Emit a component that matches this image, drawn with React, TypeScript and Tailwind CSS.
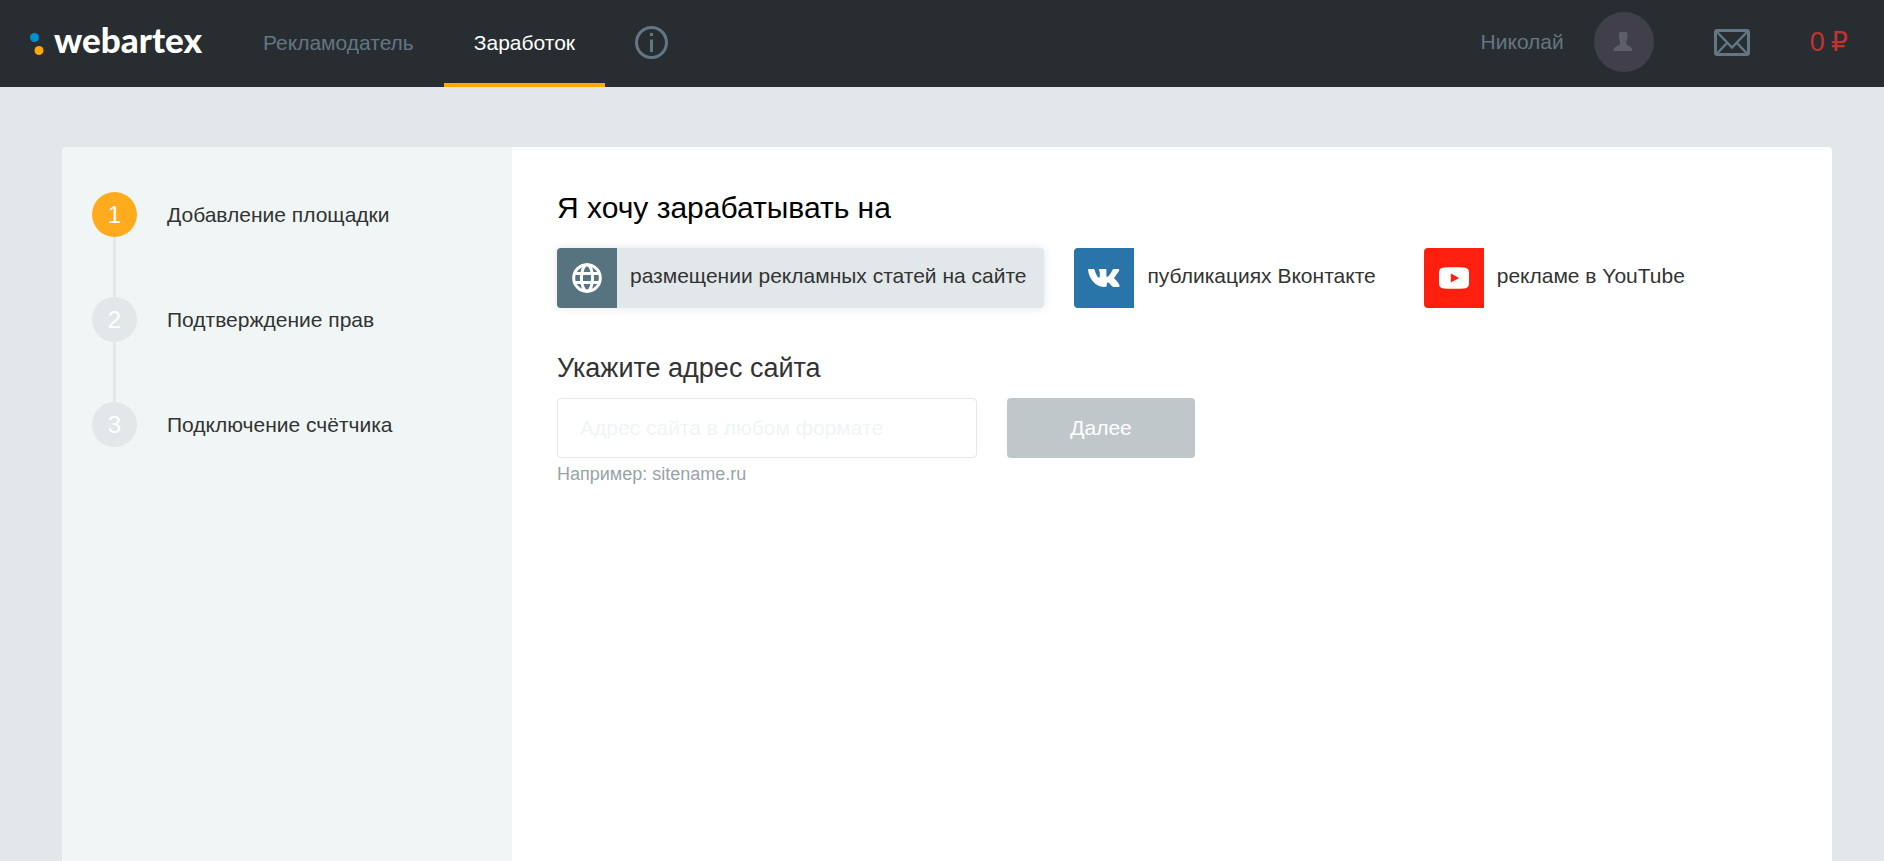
import { useState } from "react";

type Source = "site" | "vk" | "youtube";

const steps = ["Добавление площадки", "Подтверждение прав", "Подключение счётчика"];

function GlobeIcon() {
  return (
    <svg viewBox="0 0 30 30" className="w-[30px] h-[30px]" fill="none" stroke="white" strokeWidth="3">
      <circle cx="15" cy="15" r="13.3" />
      <ellipse cx="15" cy="15" rx="5.600" ry="13.3" />
      <path d="M3 10.500h24M3 19.500h24" />
    </svg>
  );
}

function VkIcon() {
  return (
    <svg viewBox="0 0 32 18" className="w-8 h-[18px]" fill="white">
      <path d="M0 .8C0 .2.4 0 1 0h4.200c.8 0 1.200.3 1.500 1.200C7.700 4.600 9.700 8.600 11 8.600c.6 0 .8-.4.8-1.800V3.500c-.1-1.700-1.100-2-1.100-2.700 0-.5.400-.8.900-.8h5.800c.8 0 1 .4 1 1.200v5.600c0 .8.4 1.100.7 1.100.5 0 1-.3 1.900-1.300 1.700-1.900 3.100-4.900 3.400-5.600.3-.7.800-1 1.500-1h4.200c1.100 0 1.400.6 1.100 1.300-.8 2-3.300 5.200-4.400 6.600-.6.900-.8 1.200 0 2.100 1 1.100 3.700 3.700 4.700 6.200.4 1.100-.1 1.800-1.200 1.800h-4.600c-1.100 0-1.500-.7-3.200-2.500-1.500-1.600-2.200-1.900-2.600-1.900-.7 0-1.100.3-1.100 1.300v1.700c0 .9-.3 1.400-2.700 1.400C7.200 18 .9 9.500 0 .8z" />
    </svg>
  );
}

function YoutubeIcon() {
  return (
    <svg viewBox="0 0 30 22" className="w-[30px] h-[22px]">
      <path
        fill="white"
        d="M5 .6C11 0 19 0 25 .6c3.500.3 5 1.900 5 5.400v10c0 3.500-1.500 5.100-5 5.400-6 .6-14 .6-20 0C1.500 21.100 0 19.500 0 16V6C0 2.500 1.500.9 5 .6z"
      />
      <path fill="#ff1f0f" d="M11.800 6.500v9l8.400-4.500z" />
    </svg>
  );
}

const sources: { id: Source; label: string; color: string; icon: React.ReactNode }[] = [
  { id: "site", label: "размещении рекламных статей на сайте", color: "bg-[#56737f]", icon: <GlobeIcon /> },
  { id: "vk", label: "публикациях Вконтакте", color: "bg-[#2975a9]", icon: <VkIcon /> },
  { id: "youtube", label: "рекламе в YouTube", color: "bg-[#ff1f0f]", icon: <YoutubeIcon /> },
];

function Header() {
  return (
    <header className="flex items-center justify-between h-[87px] pl-[30px] pr-9 bg-[#282d31] text-[#637683] text-[21px]">
      <div className="flex items-center h-full">
        <a href="#" className="flex items-center gap-2.5 w-[203px]">
          <svg viewBox="0 0 14 22" className="w-3.5 h-[22px]">
            <circle cx="4.500" cy="4.500" r="4.500" fill="#0090cf" />
            <circle cx="9" cy="17.500" r="4.500" fill="#ffa800" />
          </svg>
          <span className="pb-2.5 text-white text-[35px] leading-9 font-black font-['Lato',sans-serif]">webartex</span>
        </a>
        <nav className="flex h-full">
          <a href="#" className="flex items-center h-full pt-0.5 px-[30px] border-b-4 border-transparent">
            Рекламодатель
          </a>
          <a href="#" className="flex items-center h-full pt-0.5 px-[30px] border-b-4 border-[#ffa800] text-white">
            Заработок
          </a>
          <a href="#" aria-label="Информация" className="flex items-center h-full pb-0.5 px-[30px]">
            <svg viewBox="0 0 33 33" className="w-[33px] h-[33px]" fill="none" stroke="currentColor" strokeWidth="3">
              <circle cx="16.500" cy="16.500" r="15" />
              <path d="M16.500 7v3M16.500 13.500v12.500" />
            </svg>
          </a>
        </nav>
      </div>
      <div className="flex items-center h-full pb-[3px]">
        <a href="#" className="flex items-center gap-[30px]">
          Николай
          <svg viewBox="0 0 60 60" className="w-[60px] h-[60px]">
            <circle cx="30" cy="30" r="30" fill="#413f4b" />
            <path
              fill="#5c5f69"
              d="M25.500 20h7.500c1 3 .8 6-.6 8.500v4c2.500 1.500 5.600 1.500 6 6.500h-19c0-5 4-4.500 6.500-6.500v-4c-1.200-2.500-1.400-5.500-.4-8.500z"
            />
          </svg>
        </a>
        <a href="#" aria-label="Сообщения" className="px-[60px]">
          <svg viewBox="0 0 36 27" className="w-9 h-[27px]" fill="none" stroke="currentColor" strokeWidth="3">
            <rect x="1.500" y="1.500" width="33" height="24" rx="1.500" />
            <path strokeWidth="2.500" d="M3 3l15 15.500L33 3M3 24.500l9.500-10M33 24.500l-9.500-10" />
          </svg>
        </a>
        <a href="#" className="flex items-baseline gap-1.5 text-[#c0342e] text-[27px]">
          0<span className="font-['DejaVu_Sans',sans-serif]">₽</span>
        </a>
      </div>
    </header>
  );
}

function Steps() {
  return (
    <ol className="w-[450px] shrink-0 rounded-l-sm bg-[#f0f6f6] px-[30px] pt-[45px]">
      {steps.map((step, index) => (
        <li key={step} className="flex gap-[30px]">
          <div className="flex flex-col items-center">
            <span
              className={`flex items-center justify-center w-[45px] h-[45px] rounded-full text-2xl text-white ${
                index === 0 ? "bg-[#ffab1d]" : "bg-[#e2e7ea]"
              }`}
            >
              {index + 1}
            </span>
            {index < steps.length - 1 && <span className="w-[3px] h-[60px] bg-[#e2e7ea]" />}
          </div>
          <span className="text-[21px] leading-[45px]">{step}</span>
        </li>
      ))}
    </ol>
  );
}

export default function App() {
  const [source, setSource] = useState<Source>("site");
  const [address, setAddress] = useState("");

  return (
    <div className="flex flex-col min-h-screen bg-[#e2e7ea] text-[#333] font-['Liberation_Sans',Arial,sans-serif]">
      <Header />
      <main className="flex grow mt-[60px] ml-[62px] mr-[52px] rounded-t-sm bg-white">
        <Steps />
        <section className="grow px-[45px] pt-10">
          <h1 className="text-[30px] leading-[42px] text-black">Я хочу зарабатывать на</h1>
          <div className="flex flex-wrap gap-[30px] mt-[19px]">
            {sources.map((item) => (
              <button
                key={item.id}
                type="button"
                aria-pressed={source === item.id}
                onClick={() => setSource(item.id)}
                className={`flex h-[60px] rounded-sm overflow-hidden text-[21px] cursor-pointer ${
                  source === item.id ? "bg-[#e2e7ea] shadow-[0_0_10px_rgba(0,0,0,0.1)]" : ""
                }`}
              >
                <span className={`flex items-center justify-center w-[60px] h-[60px] ${item.color}`}>{item.icon}</span>
                <span className="pl-[13px] pr-[18px] leading-[56px]">{item.label}</span>
              </button>
            ))}
          </div>
          <form className="mt-10" onSubmit={(e) => e.preventDefault()}>
            <label htmlFor="address" className="block text-[27px] leading-10">
              Укажите адрес сайта
            </label>
            <div className="flex gap-[30px] mt-2.5">
              <input
                id="address"
                type="text"
                value={address}
                onChange={(e) => setAddress(e.target.value)}
                placeholder="Адрес сайта в любом формате"
                className="w-[420px] h-[60px] px-[22px] border border-[#e2e7ea] rounded-sm text-[21px] placeholder:text-[#f0f4f5] focus:outline-none focus:border-[#c0c7cb]"
              />
              <button type="submit" className="w-[188px] h-[60px] rounded-sm bg-[#c0c7cb] text-[21px] text-white cursor-pointer">
                Далее
              </button>
            </div>
            <p className="mt-1 text-lg leading-6 text-[#98a3a9]">Например: sitename.ru</p>
          </form>
        </section>
      </main>
    </div>
  );
}
